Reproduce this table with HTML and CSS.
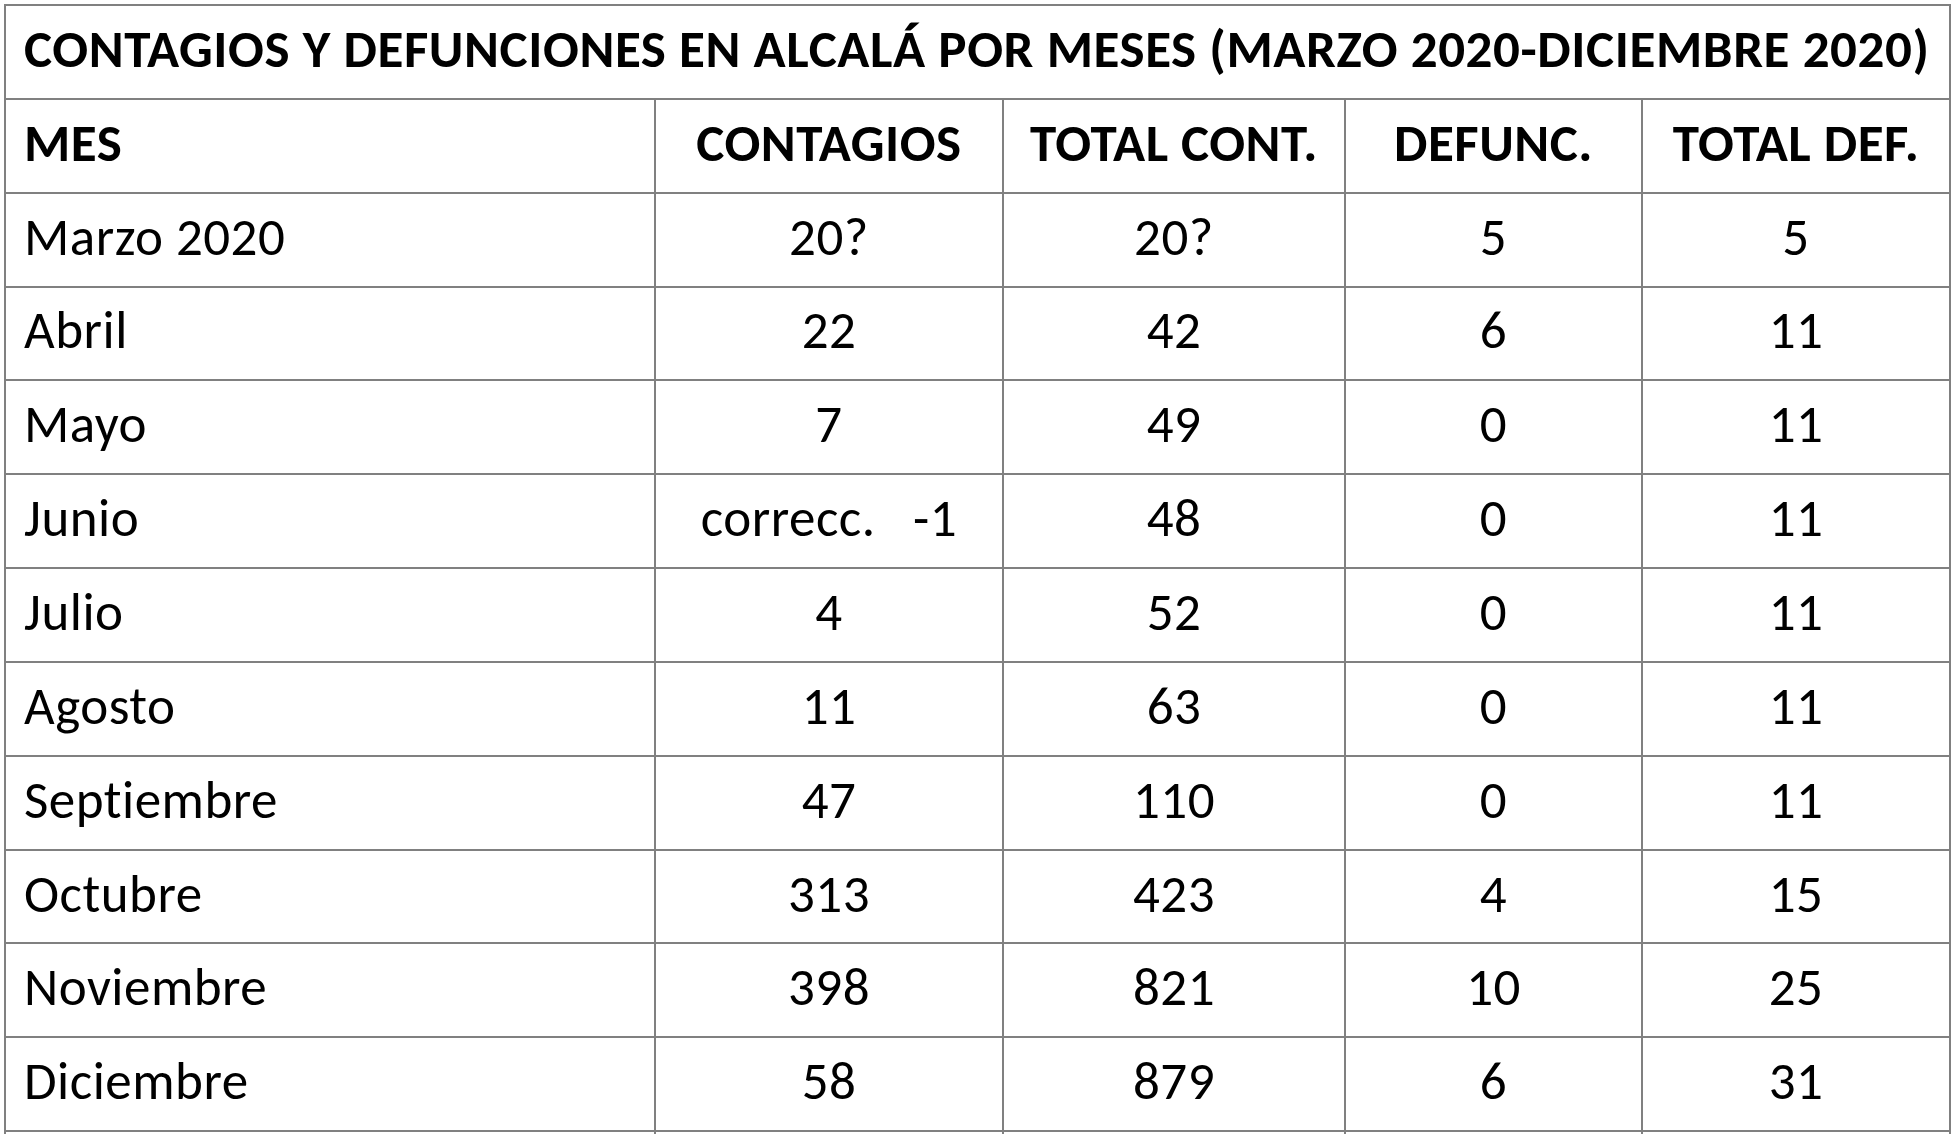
FILE: index.html
```html
<!DOCTYPE html>
<html lang="es">
<head>
<meta charset="utf-8">
<title>Contagios y defunciones en Alcalá</title>
<link rel="stylesheet" href="styles.css">
</head>
<body>
<div class="sheet">
  <div class="cell title">CONTAGIOS Y DEFUNCIONES EN ALCALÁ POR MESES (MARZO 2020-DICIEMBRE 2020)</div>

  <div class="cell head left">MES</div>
  <div class="cell head">CONTAGIOS</div>
  <div class="cell head">TOTAL CONT.</div>
  <div class="cell head">DEFUNC.</div>
  <div class="cell head">TOTAL DEF.</div>

  <div class="cell left">Marzo 2020</div><div class="cell">20?</div><div class="cell">20?</div><div class="cell">5</div><div class="cell">5</div>
  <div class="cell left">Abril</div><div class="cell">22</div><div class="cell">42</div><div class="cell">6</div><div class="cell">11</div>
  <div class="cell left">Mayo</div><div class="cell">7</div><div class="cell">49</div><div class="cell">0</div><div class="cell">11</div>
  <div class="cell left">Junio</div><div class="cell"><span class="pre">correcc.&nbsp;&nbsp;&nbsp;-1</span></div><div class="cell">48</div><div class="cell">0</div><div class="cell">11</div>
  <div class="cell left">Julio</div><div class="cell">4</div><div class="cell">52</div><div class="cell">0</div><div class="cell">11</div>
  <div class="cell left">Agosto</div><div class="cell">11</div><div class="cell">63</div><div class="cell">0</div><div class="cell">11</div>
  <div class="cell left">Septiembre</div><div class="cell">47</div><div class="cell">110</div><div class="cell">0</div><div class="cell">11</div>
  <div class="cell left">Octubre</div><div class="cell">313</div><div class="cell">423</div><div class="cell">4</div><div class="cell">15</div>
  <div class="cell left">Noviembre</div><div class="cell">398</div><div class="cell">821</div><div class="cell">10</div><div class="cell">25</div>
  <div class="cell left">Diciembre</div><div class="cell">58</div><div class="cell">879</div><div class="cell">6</div><div class="cell">31</div>

  <div class="cell left"></div><div class="cell"></div><div class="cell"></div><div class="cell"></div><div class="cell"></div>
</div>
</body>
</html>
```
FILE: styles.css
```css
html, body {
  margin: 0;
  padding: 0;
  background: #ffffff;
}

body {
  padding: 4px 0 0 4px;
  overflow: hidden;
  height: 1134px;
  box-sizing: border-box;
}

.sheet {
  display: grid;
  grid-template-columns: 648px 346px 340px 295px 306px;
  grid-auto-rows: 91.85px;
  gap: 2px;
  padding: 2px;
  background: #808080;
  width: max-content;
  font-family: "Carlito", "Lato", sans-serif;
  font-size: 53px;
  letter-spacing: 0.5px;
  color: #000000;
}

.cell {
  background: #ffffff;
  display: flex;
  align-items: center;
  justify-content: center;
  line-height: 1;
  padding-bottom: 5px;
  box-sizing: border-box;
  white-space: nowrap;
}

.cell.left {
  justify-content: flex-start;
  padding-left: 18px;
}

.title {
  grid-column: 1 / -1;
  justify-content: flex-start;
  padding-left: 18px;
  font-weight: 700;
  letter-spacing: 0.6px;
}

.head {
  font-weight: 700;
}

.pre {
  white-space: pre;
}
```
